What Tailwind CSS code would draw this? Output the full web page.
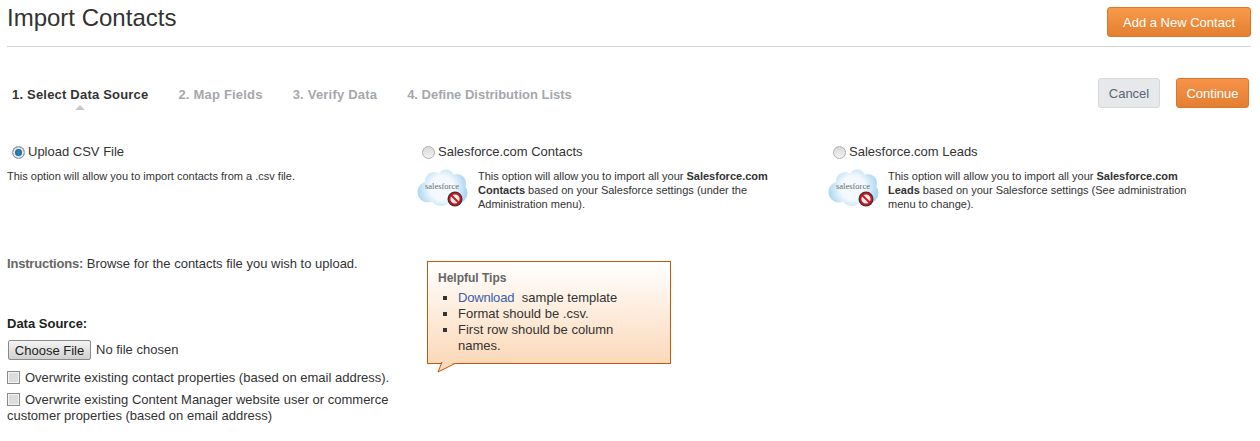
<!DOCTYPE html>
<html lang="en">
<head>
  <meta charset="UTF-8">
  <title>Import Contacts</title>
  <script src="https://cdn.jsdelivr.net/npm/@tailwindcss/browser@4"></script>
</head>
<body class="bg-white font-['Liberation_Sans',Arial,sans-serif] text-[#333] overflow-hidden">
  <div class="w-[1260px] h-[441px] pl-[7px] pr-[9px]">
    <!-- page header -->
    <header class="flex justify-between h-[47px] border-b border-[#d4d4d4]">
      <h1 class="text-[24px] leading-[36px] text-[#333]">Import Contacts</h1>
      <button class="mt-[7px] w-[144px] h-[30px] pt-px rounded-[3px] border border-[#d9782d] bg-gradient-to-b from-[#f89a4a] to-[#e37f30] text-white text-[13px]">Add a New Contact</button>
    </header>

    <!-- wizard steps -->
    <div class="flex justify-between items-start pl-[5px] pt-[31px] pr-[2px]">
      <ol class="flex gap-[30px] text-[13px] font-bold leading-[34px] tracking-[0.2px] text-[#a5a8ad]">
        <li class="relative text-[#333]">1. Select Data Source
          <span class="absolute left-[63px] top-[27px] w-0 h-0 border-x-[5px] border-x-transparent border-b-[5px] border-b-[#c8c8c8]"></span>
        </li>
        <li>2. Map Fields</li>
        <li>3. Verify Data</li>
        <li class="tracking-normal">4. Define Distribution Lists</li>
      </ol>
      <div class="flex gap-[16px]">
        <button class="w-[62px] h-[30px] pt-px rounded-[3px] border border-[#d5d8da] bg-[#e6e8ea] text-[#5a6478] text-[13px]">Cancel</button>
        <button class="w-[73px] h-[30px] pt-px rounded-[3px] border border-[#d9782d] bg-gradient-to-b from-[#f6934a] to-[#e37f30] text-white text-[13px]">Continue</button>
      </div>
    </div>

    <!-- data source options -->
    <div class="grid grid-cols-[415px_411px_1fr] mt-[31px]">
      <div>
        <label class="flex items-center gap-[3px] pl-[5px] h-[18px] text-[13px]">
          <span class="w-[13px] h-[13px] rounded-full border border-[#9a9a9a] bg-radial from-[#2a8fc8] to-[#0b3f6b] shadow-[inset_0_0_0_2px_#e4e4e4]"></span>
          Upload CSV File
        </label>
        <p class="mt-[8px] text-[11px] leading-[14px]">This option will allow you to import contacts from a .csv file.</p>
      </div>
      <div>
        <label class="flex items-center gap-[3px] h-[18px] text-[13px]">
          <span class="w-[13px] h-[13px] rounded-full border border-[#b0b0b0] bg-gradient-to-b from-[#d8d8d8] to-[#f2f2f2]"></span>
          Salesforce.com Contacts
        </label>
        <div class="flex gap-[10px] mt-[8px] -ml-[5px]">
          <svg width="51" height="40" viewBox="0 0 51 40" class="shrink-0">
            <defs><radialGradient id="cloud1" gradientUnits="userSpaceOnUse" cx="25" cy="19" r="27"><stop offset="0.45" stop-color="#f3f9fd"/><stop offset="1" stop-color="#9fd0f1"/></radialGradient></defs>
            <g fill="url(#cloud1)">
              <circle cx="11" cy="23" r="10.500"/><circle cx="17" cy="12" r="9"/><circle cx="29" cy="9" r="8.500"/>
              <circle cx="40" cy="14" r="9"/><circle cx="40" cy="24" r="10.500"/><circle cx="24" cy="26" r="11"/>
            </g>
            <text x="8" y="20" font-size="8.500" font-family="'Liberation Serif',serif" fill="#6b6b6b">salesforce</text>
            <circle cx="38" cy="30" r="7.500" fill="#333"/>
            <circle cx="38" cy="30" r="5.500" fill="#eee" stroke="#d0141c" stroke-width="1.800"/>
            <path d="M34 26l8 8" stroke="#d0141c" stroke-width="1.800"/>
          </svg>
          <p class="text-[11px] leading-[14px] w-[300px]">This option will allow you to import all your <b>Salesforce.com Contacts</b> based on your Salesforce settings (under the Administration menu).</p>
        </div>
      </div>
      <div>
        <label class="flex items-center gap-[3px] h-[18px] text-[13px]">
          <span class="w-[13px] h-[13px] rounded-full border border-[#b0b0b0] bg-gradient-to-b from-[#d8d8d8] to-[#f2f2f2]"></span>
          Salesforce.com Leads
        </label>
        <div class="flex gap-[9px] mt-[8px] -ml-[5px]">
          <svg width="51" height="40" viewBox="0 0 51 40" class="shrink-0">
            <defs><radialGradient id="cloud2" gradientUnits="userSpaceOnUse" cx="25" cy="19" r="27"><stop offset="0.45" stop-color="#f3f9fd"/><stop offset="1" stop-color="#9fd0f1"/></radialGradient></defs>
            <g fill="url(#cloud2)">
              <circle cx="11" cy="23" r="10.500"/><circle cx="17" cy="12" r="9"/><circle cx="29" cy="9" r="8.500"/>
              <circle cx="40" cy="14" r="9"/><circle cx="40" cy="24" r="10.500"/><circle cx="24" cy="26" r="11"/>
            </g>
            <text x="8" y="20" font-size="8.500" font-family="'Liberation Serif',serif" fill="#6b6b6b">salesforce</text>
            <circle cx="38" cy="30" r="7.500" fill="#333"/>
            <circle cx="38" cy="30" r="5.500" fill="#eee" stroke="#d0141c" stroke-width="1.800"/>
            <path d="M34 26l8 8" stroke="#d0141c" stroke-width="1.800"/>
          </svg>
          <p class="text-[11px] leading-[14px] w-[300px]">This option will allow you to import all your <b>Salesforce.com Leads</b> based on your Salesforce settings (See administration menu to change).</p>
        </div>
      </div>
    </div>

    <!-- lower part: form and tips -->
    <div class="flex mt-[45px] items-start">
      <div class="w-[420px] text-[13px]">
        <p class="leading-[16px]"><b class="text-[#666] tracking-[-0.2px]">Instructions:</b> Browse for the contacts file you wish to upload.</p>
        <p class="mt-[44px] leading-[16px] font-bold text-[#222]">Data Source:</p>
        <div class="flex items-center gap-[5px] mt-[8px] ml-[1px]">
          <button class="w-[83px] h-[20px] rounded-[2px] border border-[#8a8a8a] bg-gradient-to-b from-[#f4f4f4] to-[#d0d0d0] text-[#222]">Choose File</button>
          <span>No file chosen</span>
        </div>
        <label class="block mt-[10px] leading-[16px]">
          <span class="inline-block align-[-2px] w-[13px] h-[13px] mr-[5px] border border-[#8a8a8a] bg-[#dcdcdc] shadow-[inset_0_0_0_1px_#f4f4f4]"></span>Overwrite existing contact properties (based on email address).
        </label>
        <label class="block mt-[6px] leading-[16px] w-[390px]">
          <span class="inline-block align-[-2px] w-[13px] h-[13px] mr-[5px] border border-[#8a8a8a] bg-[#dcdcdc] shadow-[inset_0_0_0_1px_#f4f4f4]"></span>Overwrite existing Content Manager website user or commerce customer properties (based on email address)
        </label>
      </div>

      <div class="relative mt-[5px] w-[244px] h-[103px] border border-[#c1590f] bg-gradient-to-b from-white to-[#fbd9b9] pl-[10px] pt-[8px] text-[13px] leading-[16px]">
        <p class="text-[12px] font-bold text-[#666]">Helpful Tips</p>
        <ul class="list-none mt-[4px] pl-[20px] w-[190px]">
          <li class="relative before:absolute before:left-[-15px] before:top-[6px] before:w-[4px] before:h-[4px] before:bg-[#333]"><a href="#" class="text-[#3b5fa8] mr-[4px] tracking-[-0.2px]">Download</a> sample template</li>
          <li class="relative before:absolute before:left-[-15px] before:top-[6px] before:w-[4px] before:h-[4px] before:bg-[#333]">Format should be .csv.</li>
          <li class="relative before:absolute before:left-[-15px] before:top-[6px] before:w-[4px] before:h-[4px] before:bg-[#333]">First row should be column names.</li>
        </ul>
        <svg width="22" height="12" viewBox="0 0 22 12" class="absolute left-[8px] -bottom-[10px]">
          <path d="M6 1L2 11 19 2.500" fill="#fbd9b9" stroke="#c1590f"/>
        </svg>
      </div>
    </div>
  </div>
</body>
</html>
